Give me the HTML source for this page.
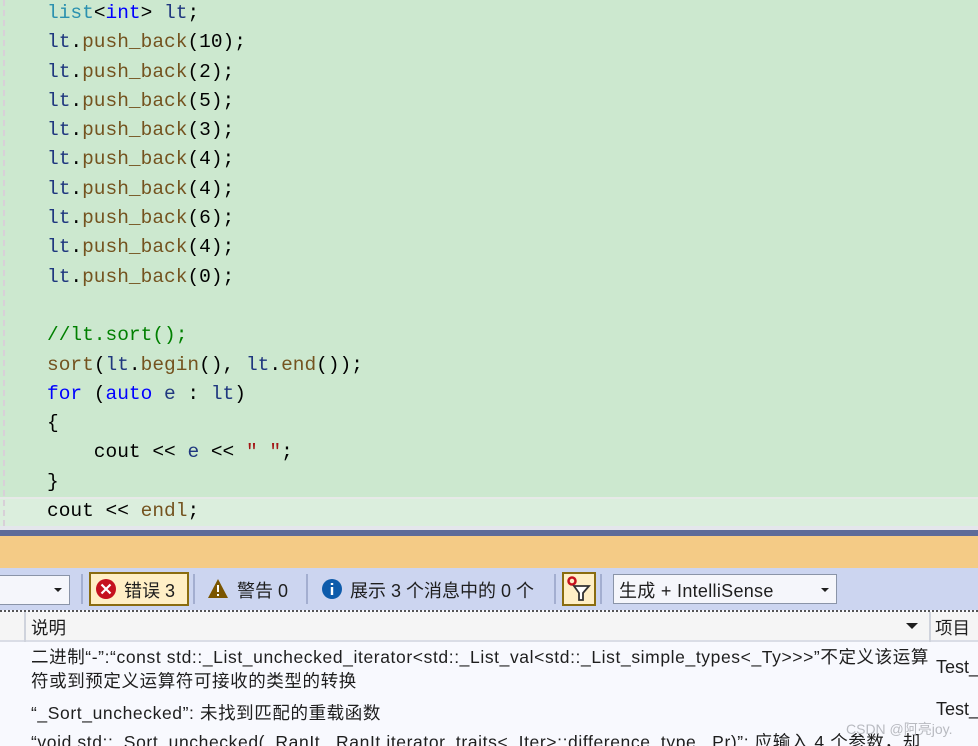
<!DOCTYPE html>
<html style="overflow:hidden;height:746px"><head><meta charset="utf-8"><style>
body{margin:0;width:978px;height:746px;overflow:hidden;background:#cce8cf;position:relative;font-family:"Liberation Sans","Noto Sans CJK SC",sans-serif}
.code{position:absolute;left:47px;top:0;font-family:"Liberation Mono","Noto Sans CJK SC",monospace;font-size:19.5px;line-height:29.3px;white-space:pre;color:#000}
.ty{color:#2b91af}.kw{color:#0000ff}.v{color:#1f377f}.f{color:#74531f}.c{color:#008000}.s{color:#a31515}
.gut{position:absolute;left:3px;top:0;height:526px;border-left:2px dashed #d8d0d8}
.cur{position:absolute;left:0;top:497px;width:978px;height:28px;background:#dbeedd;border-top:2px solid #e6e9e7;border-bottom:2px solid #e6e9e7}
.abs{position:absolute}
.row{font-size:17.5px;letter-spacing:0.6px;color:#1e1e1e;white-space:nowrap}
</style></head><body>
<div class="cur"></div>
<div class="gut"></div>
<div class="code" style="top:-1px"><span class="ty">list</span>&lt;<span class="kw">int</span>&gt; <span class="v">lt</span>;
<span class="v">lt</span>.<span class="f">push_back</span>(10);
<span class="v">lt</span>.<span class="f">push_back</span>(2);
<span class="v">lt</span>.<span class="f">push_back</span>(5);
<span class="v">lt</span>.<span class="f">push_back</span>(3);
<span class="v">lt</span>.<span class="f">push_back</span>(4);
<span class="v">lt</span>.<span class="f">push_back</span>(4);
<span class="v">lt</span>.<span class="f">push_back</span>(6);
<span class="v">lt</span>.<span class="f">push_back</span>(4);
<span class="v">lt</span>.<span class="f">push_back</span>(0);

<span class="c">//lt.sort();</span>
<span class="f">sort</span>(<span class="v">lt</span>.<span class="f">begin</span>(), <span class="v">lt</span>.<span class="f">end</span>());
<span class="kw">for</span> (<span class="kw">auto</span> <span class="v">e</span> : <span class="v">lt</span>)
{
    cout &lt;&lt; <span class="v">e</span> &lt;&lt; <span class="s">" "</span>;
}
cout &lt;&lt; <span class="f">endl</span>;</div>
<div class="abs" style="left:0;top:526px;width:978px;height:4px;background:#e4e6ec"></div>
<div class="abs" style="left:0;top:530px;width:978px;height:6px;background:#5d6b99"></div>
<div class="abs" style="left:0;top:536px;width:978px;height:32px;background:#f4cb86"></div>
<div class="abs" style="left:0;top:568px;width:978px;height:42px;background:#ccd5f0"></div>
<div class="abs" style="left:-2px;top:575px;width:70px;height:28px;background:#f5f6fb;border:1px solid #8a94a8"></div>
<div class="abs" style="left:54px;top:588px;border-left:4px solid transparent;border-right:4px solid transparent;border-top:4px solid #1e1e1e"></div>
<div class="abs" style="left:81px;top:574px;width:2px;height:30px;background:#a3aed0"></div>
<div class="abs" style="left:89px;top:572px;width:96px;height:30px;background:#ffefc6;border:2px solid #8a6c10"></div>
<svg class="abs" style="left:95px;top:578px" width="22" height="22"><circle cx="11" cy="11" r="10" fill="#c5111e"/><path d="M6.5 6.5L15.5 15.5M15.5 6.5L6.5 15.5" stroke="#fff" stroke-width="2.2"/></svg>
<div class="abs" style="left:124px;top:577px;font-size:18px;color:#1e1e1e">错误 3</div>
<div class="abs" style="left:193px;top:574px;width:2px;height:30px;background:#a3aed0"></div>
<svg class="abs" style="left:207px;top:578px" width="22" height="22"><path d="M11 1L21 20H1Z" fill="#7a5500"/><path d="M11 7V14M11 16V18" stroke="#fff" stroke-width="2"/></svg>
<div class="abs" style="left:237px;top:577px;font-size:18px;color:#1e1e1e">警告 0</div>
<div class="abs" style="left:306px;top:574px;width:2px;height:30px;background:#a3aed0"></div>
<svg class="abs" style="left:321px;top:578px" width="22" height="22"><circle cx="11" cy="11" r="10" fill="#0d5bab"/><path d="M11 9V17M11 5V7" stroke="#fff" stroke-width="2.4"/></svg>
<div class="abs" style="left:350px;top:577px;font-size:18px;color:#1e1e1e">展示 3 个消息中的 0 个</div>
<div class="abs" style="left:554px;top:574px;width:2px;height:30px;background:#a3aed0"></div>
<div class="abs" style="left:562px;top:572px;width:30px;height:30px;background:#ffefc6;border:2px solid #8a6c10"></div>
<svg class="abs" style="left:565px;top:575px" width="28" height="28"><circle cx="7" cy="6" r="3.5" fill="none" stroke="#c5111e" stroke-width="2.5"/><path d="M9 11H24L18 18V25H14V18Z" fill="#fff" stroke="#333" stroke-width="1.8"/></svg>
<div class="abs" style="left:600px;top:574px;width:2px;height:30px;background:#a3aed0"></div>
<div class="abs" style="left:613px;top:574px;width:222px;height:28px;background:#f5f6fb;border:1px solid #8a94a8"></div>
<div class="abs" style="left:619px;top:577px;font-size:18px;letter-spacing:0.3px;color:#1e1e1e">生成 + IntelliSense</div>
<div class="abs" style="left:821px;top:588px;border-left:4px solid transparent;border-right:4px solid transparent;border-top:4px solid #1e1e1e"></div>
<div class="abs" style="left:0;top:610px;width:978px;height:136px;background:#f8f9fe"></div>
<div class="abs" style="left:0;top:610px;width:978px;height:0;border-top:2px dotted #555"></div>
<div class="abs" style="left:0;top:612px;width:978px;height:28px;background:#f5f5f5;border-bottom:2px solid #dadde6"></div>
<div class="abs" style="left:24px;top:612px;width:2px;height:30px;background:#cfd3dc"></div>
<div class="abs" style="left:929px;top:612px;width:2px;height:30px;background:#cfd3dc"></div>
<div class="abs" style="left:31px;top:615px;font-size:17.5px;color:#1e1e1e">说明</div>
<div class="abs" style="left:906px;top:623px;border-left:6px solid transparent;border-right:6px solid transparent;border-top:6px solid #1e1e1e"></div>
<div class="abs" style="left:935px;top:615px;font-size:17.5px;color:#1e1e1e">项目</div>
<div class="abs row" style="left:31px;top:645px;line-height:24px">二进制“-”:“const std::_List_unchecked_iterator&lt;std::_List_val&lt;std::_List_simple_types&lt;_Ty&gt;&gt;&gt;”不定义该运算<br>符或到预定义运算符可接收的类型的转换</div>
<div class="abs row" style="left:31px;top:700px">“_Sort_unchecked”: 未找到匹配的重载函数</div>
<div class="abs row" style="left:31px;top:729px">“void std::_Sort_unchecked(_RanIt,_RanIt,iterator_traits&lt;_Iter&gt;::difference_type,_Pr)”: 应输入 4 个参数，却</div>
<div class="abs" style="left:931px;top:642px;width:47px;height:104px;background:#f8f9fe"></div>
<div class="abs" style="left:936px;top:657px;font-size:18px;color:#1e1e1e">Test_</div>
<div class="abs" style="left:936px;top:699px;font-size:18px;color:#1e1e1e">Test_</div>
<div class="abs" style="left:846px;top:719px;font-size:14px;color:#b8bac0">CSDN @阿亮joy.</div>
</body></html>
